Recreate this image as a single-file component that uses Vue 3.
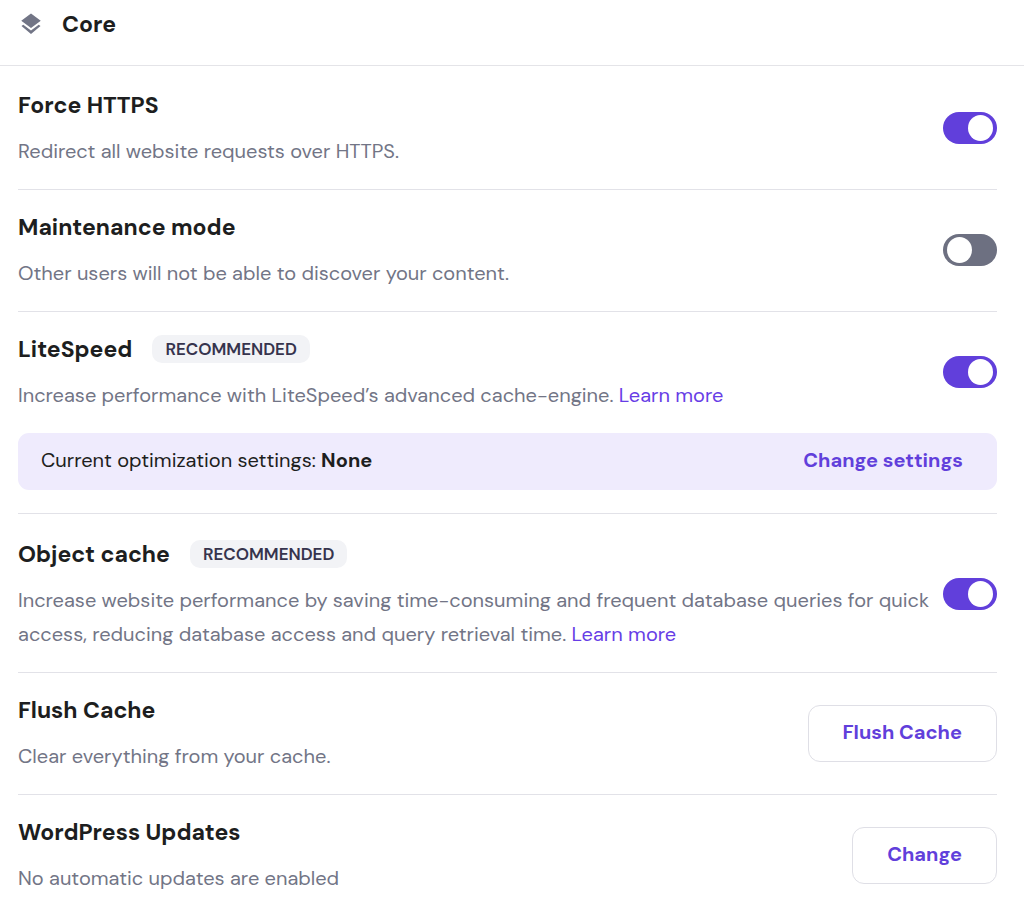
<template>
  <main class="core-settings">
    <header class="header">
      <svg class="header-icon" viewBox="0 0 24 24" aria-hidden="true">
        <path d="M12 2.4l9 6.7-9 6.7-9-6.7zM3.2 13.9l1.7-1.3 7.1 5.5 7.1-5.5 1.7 1.3-8.8 7.3z" />
      </svg>
      <h1 class="header-title">Core</h1>
    </header>

    <div class="settings-list">
      <section
        v-for="item in settings"
        :key="item.id"
        :class="['setting', { 'setting--with-panel': item.panel }]"
      >
        <div class="setting-row">
          <div class="setting-text">
            <div class="setting-heading">
              <h2 :id="`${item.id}-title`" class="setting-title">{{ item.title }}</h2>
              <span v-if="item.recommended" class="badge">RECOMMENDED</span>
            </div>
            <p class="setting-description">
              {{ item.description }}
              <a v-if="item.link" href="#" class="link" @click.prevent>{{ item.link }}</a>
            </p>
          </div>

          <!-- Toggle or action button -->
          <input
            v-if="item.type === 'toggle'"
            v-model="item.enabled"
            type="checkbox"
            role="switch"
            class="toggle"
            :aria-labelledby="`${item.id}-title`"
          />
          <button v-else type="button" class="btn btn-outline">{{ item.action }}</button>
        </div>

        <div v-if="item.panel" class="panel">
          <span>{{ item.panel.label }} <strong>{{ item.panel.value }}</strong></span>
          <button type="button" class="btn btn-text">{{ item.panel.action }}</button>
        </div>
      </section>
    </div>
  </main>
</template>

<script setup>
import { reactive } from 'vue'

const settings = reactive([
  {
    id: 'force-https',
    type: 'toggle',
    title: 'Force HTTPS',
    description: 'Redirect all website requests over HTTPS.',
    enabled: true,
  },
  {
    id: 'maintenance',
    type: 'toggle',
    title: 'Maintenance mode',
    description: 'Other users will not be able to discover your content.',
    enabled: false,
  },
  {
    id: 'litespeed',
    type: 'toggle',
    title: 'LiteSpeed',
    description: 'Increase performance with LiteSpeed’s advanced cache-engine.',
    link: 'Learn more',
    recommended: true,
    enabled: true,
    panel: {
      label: 'Current optimization settings:',
      value: 'None',
      action: 'Change settings',
    },
  },
  {
    id: 'object-cache',
    type: 'toggle',
    title: 'Object cache',
    description:
      'Increase website performance by saving time-consuming and frequent database queries for quick access, reducing database access and query retrieval time.',
    link: 'Learn more',
    recommended: true,
    enabled: true,
  },
  {
    id: 'flush-cache',
    type: 'action',
    title: 'Flush Cache',
    description: 'Clear everything from your cache.',
    action: 'Flush Cache',
  },
  {
    id: 'wp-updates',
    type: 'action',
    title: 'WordPress Updates',
    description: 'No automatic updates are enabled',
    action: 'Change',
  },
])
</script>

<style>
body {
  margin: 0;
  background: #fff;
}
</style>

<style scoped>
.core-settings {
  font-family: 'DM Sans', Inter, 'Liberation Sans', sans-serif;
  font-size: 20px;
  line-height: 34px;
  color: #1d1e20;
}

.header {
  display: flex;
  align-items: center;
  gap: 18px;
  padding: 7px 18px 24px;
  border-bottom: 1px solid #e4e4e8;
}

.header-icon {
  width: 26px;
  height: 26px;
  fill: #727586;
}

.header-title,
.setting-title {
  margin: 0;
  font-size: 23px;
  font-weight: 700;
  line-height: 34px;
}

.settings-list {
  padding: 0 27px 0 18px;
}

.setting {
  padding: 20px 0 21px;
  border-bottom: 1px solid #e2e2e8;
}

.setting:first-child {
  padding-top: 22px;
}

.setting--with-panel {
  padding-bottom: 23px;
}

.setting--with-panel + .setting {
  padding-top: 23px;
}

.setting:last-child {
  padding-bottom: 0;
  border-bottom: none;
}

.setting-row {
  display: flex;
  align-items: center;
  justify-content: space-between;
  gap: 8px;
}

.setting-text {
  min-width: 0;
}

.setting-heading {
  display: flex;
  align-items: center;
  gap: 20px;
  margin-bottom: 12px;
}

.setting-description {
  margin: 0;
  color: #727586;
}

.badge {
  padding: 0 13px;
  border-radius: 10px;
  background: #f2f3f6;
  color: #36344d;
  font-size: 17px;
  font-weight: 600;
  line-height: 28px;
}

.link {
  color: #673de6;
  text-decoration: none;
}

.toggle {
  flex: none;
  display: flex;
  align-items: center;
  box-sizing: border-box;
  width: 54px;
  height: 32px;
  margin: 0;
  padding: 0 4px;
  border-radius: 16px;
  background: #6d7081;
  appearance: none;
  cursor: pointer;
}

.toggle::before {
  content: '';
  width: 25px;
  height: 26px;
  border-radius: 50%;
  background: #fff;
}

.toggle:checked {
  justify-content: flex-end;
  background: #613fdb;
}

.btn {
  flex: none;
  font: inherit;
  font-weight: 700;
  color: #613fdb;
  background: none;
  border: none;
  cursor: pointer;
}

.btn-outline {
  padding: 9px 34px 12px;
  border: 1px solid #dfdfe6;
  border-radius: 12px;
}

.btn-text {
  padding: 0;
}

.panel {
  display: flex;
  align-items: center;
  justify-content: space-between;
  margin-top: 21px;
  padding: 10px 34px 13px 23px;
  border-radius: 11px;
  background: #efebfd;
}
</style>
